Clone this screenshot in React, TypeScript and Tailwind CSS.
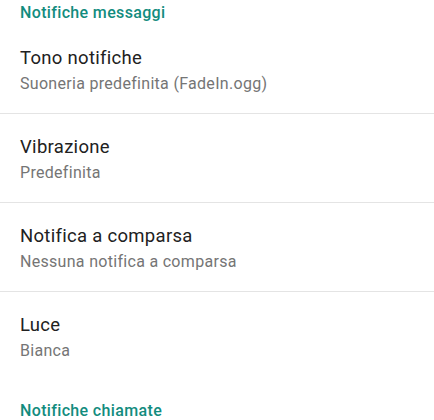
const rows = [
  { title: "Tono notifiche", summary: "Suoneria predefinita (FadeIn.ogg)" },
  { title: "Vibrazione", summary: "Predefinita" },
  { title: "Notifica a comparsa", summary: "Nessuna notifica a comparsa" },
  { title: "Luce", summary: "Bianca" },
]

function Header({ label, className }: { label: string; className: string }) {
  return (
    <div className={`px-5 text-[16px] leading-5 font-medium tracking-[0.35px] text-[#128c7e] ${className}`}>
      {label}
    </div>
  )
}

export default function App() {
  return (
    <div className="w-[434px] h-[420px] overflow-hidden bg-white font-['Roboto',_'Liberation_Sans',_sans-serif]">
      <Header label="Notifiche messaggi" className="pt-[3px]" />
      <div>
        {rows.map((r, i) => (
          <div
            key={r.title}
            className={`px-5 pb-[19px] ${i === 0 ? "pt-[23px]" : "pt-[21px]"} ${
              i < rows.length - 1 ? "border-b border-[#e4e4e4]" : ""
            }`}
          >
            <div className="text-[18.5px] leading-6 tracking-[0.3px] text-[#212121]">{r.title}</div>
            <div className="mt-[4px] text-[16px] leading-5 tracking-[0.3px] text-[#757575]">{r.summary}</div>
          </div>
        ))}
      </div>
      <Header label="Notifiche chiamate" className="pt-[21px]" />
    </div>
  )
}
